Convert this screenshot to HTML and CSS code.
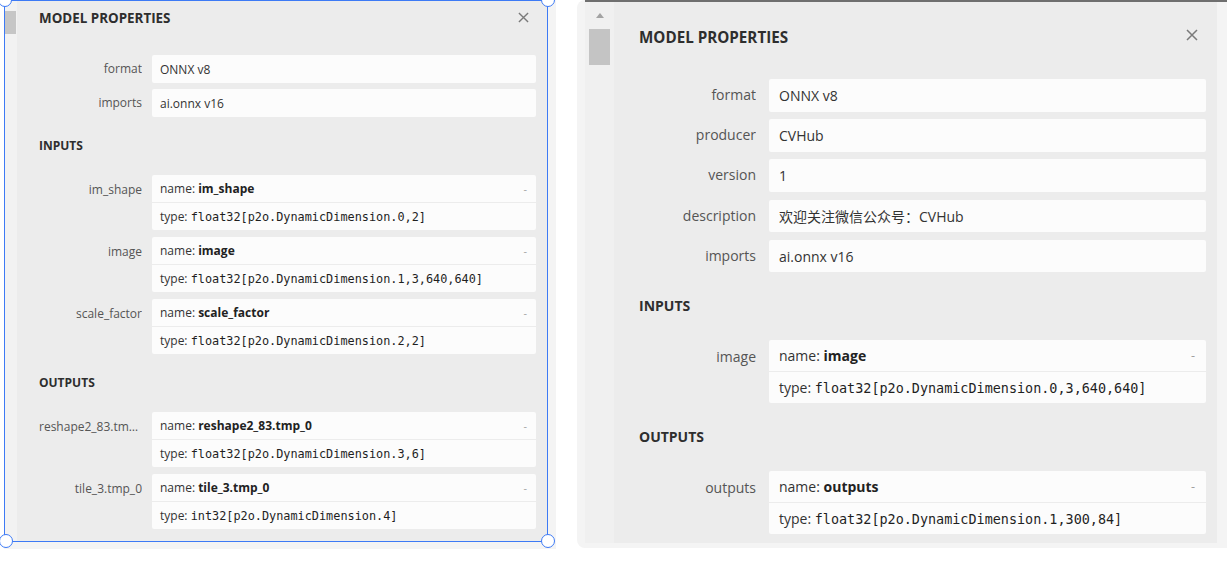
FILE: index.html
```html
<!DOCTYPE html>
<html lang="en">
<head>
<meta charset="utf-8">
<title>Model properties</title>
<link rel="stylesheet" href="styles.css">
</head>
<body>
<div class="stage">
  <section class="pane pane-a">
    <div class="track"><div class="thumb"></div></div>
    <div class="sheet">
      <div class="head">
        <span class="title">MODEL PROPERTIES</span>
        <svg class="close" viewBox="0 0 12 12"><path d="M1 1L11 11M11 1L1 11"/></svg>
      </div>
      <div class="props first">
        <div class="row"><div class="label">format</div><div class="box"><div class="line">ONNX v8</div></div></div>
        <div class="row"><div class="label">imports</div><div class="box"><div class="line">ai.onnx v16</div></div></div>
      </div>
      <div class="section">INPUTS</div>
      <div class="props blocks">
        <div class="row"><div class="label">im_shape</div><div class="box">
          <div class="line"><span>name: <b>im_shape</b></span><span class="toggle">-</span></div>
          <div class="line"><span>type: <code>float32[p2o.DynamicDimension.0,2]</code></span></div>
        </div></div>
        <div class="row"><div class="label">image</div><div class="box">
          <div class="line"><span>name: <b>image</b></span><span class="toggle">-</span></div>
          <div class="line"><span>type: <code>float32[p2o.DynamicDimension.1,3,640,640]</code></span></div>
        </div></div>
        <div class="row"><div class="label">scale_factor</div><div class="box">
          <div class="line"><span>name: <b>scale_factor</b></span><span class="toggle">-</span></div>
          <div class="line"><span>type: <code>float32[p2o.DynamicDimension.2,2]</code></span></div>
        </div></div>
      </div>
      <div class="section">OUTPUTS</div>
      <div class="props blocks">
        <div class="row"><div class="label">reshape2_83.tmp_0</div><div class="box">
          <div class="line"><span>name: <b>reshape2_83.tmp_0</b></span><span class="toggle">-</span></div>
          <div class="line"><span>type: <code>float32[p2o.DynamicDimension.3,6]</code></span></div>
        </div></div>
        <div class="row"><div class="label">tile_3.tmp_0</div><div class="box">
          <div class="line"><span>name: <b>tile_3.tmp_0</b></span><span class="toggle">-</span></div>
          <div class="line"><span>type: <code>int32[p2o.DynamicDimension.4]</code></span></div>
        </div></div>
      </div>
    </div>
    <div class="selection">
      <span class="handle tl"></span><span class="handle tr"></span>
      <span class="handle bl"></span><span class="handle br"></span>
    </div>
  </section>

  <section class="pane pane-b">
    <div class="frame">
      <div class="track"><span class="arrow"></span><div class="thumb"></div></div>
      <div class="sheet">
        <div class="head">
          <span class="title">MODEL PROPERTIES</span>
          <svg class="close" viewBox="0 0 12 12"><path d="M1 1L11 11M11 1L1 11"/></svg>
        </div>
        <div class="props first">
          <div class="row"><div class="label">format</div><div class="box"><div class="line">ONNX v8</div></div></div>
          <div class="row"><div class="label">producer</div><div class="box"><div class="line">CVHub</div></div></div>
          <div class="row"><div class="label">version</div><div class="box"><div class="line">1</div></div></div>
          <div class="row"><div class="label">description</div><div class="box"><div class="line">欢迎关注微信公众号：CVHub</div></div></div>
          <div class="row"><div class="label">imports</div><div class="box"><div class="line">ai.onnx v16</div></div></div>
        </div>
        <div class="section">INPUTS</div>
        <div class="props blocks">
          <div class="row"><div class="label">image</div><div class="box">
            <div class="line"><span>name: <b>image</b></span><span class="toggle">-</span></div>
            <div class="line"><span>type: <code>float32[p2o.DynamicDimension.0,3,640,640]</code></span></div>
          </div></div>
        </div>
        <div class="section">OUTPUTS</div>
        <div class="props blocks">
          <div class="row"><div class="label">outputs</div><div class="box">
            <div class="line"><span>name: <b>outputs</b></span><span class="toggle">-</span></div>
            <div class="line"><span>type: <code>float32[p2o.DynamicDimension.1,300,84]</code></span></div>
          </div></div>
        </div>
      </div>
    </div>
  </section>
</div>
</body>
</html>
```

FILE: styles.css
```css
* { box-sizing: border-box; }

html, body {
  margin: 0;
  background: #ffffff;
}

body {
  font-family: "Open Sans", "Noto Sans CJK SC", sans-serif;
  color: #333333;
}

.stage {
  display: flex;
  align-items: flex-start;
  padding-left: 4px;
}

/* ---------- pane scale variables ---------- */
.pane-a {
  --pad-l: 22px;
  --pad-r: 12px;
  --label-w: 103px;
  --label-gap: 10px;
  --fs: 12px;
  --mono: 11.85px;
  --title-fs: 13.4px;
  --head-h: 36px;
  --first-m: 19px;
  --row-h: 28px;
  --row-gap: 6px;
  --line-h: 27px;
  --block-gap: 7px;
  --sec-h: 28px;
  --sec-m: 15px;
  --text-pad: 8px;
  --close: 11px;
  --close-r: 19px;
}

.pane-b {
  --pad-l: 25px;
  --pad-r: 11px;
  --label-w: 117px;
  --label-gap: 13px;
  --fs: 14px;
  --mono: 13.45px;
  --title-fs: 15.2px;
  --head-h: 70px;
  --first-m: 7px;
  --row-h: 32.6px;
  --row-gap: 7.6px;
  --line-h: 31px;
  --block-gap: 8px;
  --sec-h: 32px;
  --sec-m: 18px;
  --text-pad: 10px;
  --close: 12px;
  --close-r: 19px;
}

/* ---------- left pane ---------- */
.pane-a {
  position: relative;
  width: 552px;
  height: 549px;
  display: flex;
  background: #f4f4f4;
  padding: 0 8px 7px 0;
}

.pane-a .track {
  width: 13px;
  height: 542px;
  background: #f2f2f2;
  padding-top: 11px;
}

.pane-a .thumb {
  margin-left: 1px;
  width: 11px;
  height: 23px;
  background: #c6c6c6;
}

.pane-a .sheet {
  width: 531px;
  height: 542px;
}

.selection {
  position: absolute;
  left: 0;
  top: 0;
  width: 544px;
  height: 542px;
  border: 1px solid #3d7af5;
}

.handle {
  position: absolute;
  width: 14px;
  height: 14px;
  border-radius: 50%;
  background: #ffffff;
  border: 1px solid #3d7af5;
}
.handle.tl { left: -7px; top: -8px; }
.handle.tr { right: -8px; top: -8px; }
.handle.bl { left: -6px; bottom: -7px; }
.handle.br { right: -8px; bottom: -7px; }

/* ---------- right pane ---------- */
.pane-b {
  margin-left: 21px;
  width: 650px;
  height: 548px;
  background: #f4f4f4;
  border-radius: 8px 0 0 8px;
  padding: 0 0 5px 8px;
  display: flex;
}

.frame {
  flex: 1;
  display: flex;
  border-top: 2px solid #6f6f6f;
}

.pane-b .track {
  width: 29px;
  background: #f0f0f0;
  display: flex;
  flex-direction: column;
  align-items: center;
}

.pane-b .arrow {
  margin-top: 11px;
  width: 0;
  height: 0;
  border-left: 4px solid transparent;
  border-right: 4px solid transparent;
  border-bottom: 5px solid #a3a3a3;
}

.pane-b .thumb {
  margin-top: 11px;
  width: 21px;
  height: 36px;
  background: #c4c4c4;
}

.pane-b .sheet {
  width: 603px;
}

/* ---------- shared sheet content ---------- */
.sheet {
  background: #ececec;
  padding: 0 var(--pad-r) 0 var(--pad-l);
  font-size: var(--fs);
}

.head {
  height: var(--head-h);
  display: flex;
  align-items: center;
  justify-content: space-between;
  margin-right: calc(var(--close-r) - var(--pad-r));
}

.title {
  font-weight: 700;
  font-size: var(--title-fs);
  color: #2e2e2e;
}

.close {
  width: var(--close);
  height: var(--close);
  margin-top: -2px;
  fill: none;
  stroke: #7a7a7a;
  stroke-width: 1.5;
}

.pane-b .close { margin-top: -4px; }

.props {
  display: flex;
  flex-direction: column;
  gap: var(--row-gap);
}

.props.first { margin-top: var(--first-m); }

.props.blocks { gap: var(--block-gap); }

.row {
  display: flex;
  align-items: flex-start;
  gap: var(--label-gap);
}

.label {
  width: var(--label-w);
  flex: none;
  text-align: right;
  line-height: var(--row-h);
  color: #555555;
  white-space: nowrap;
  overflow: hidden;
  text-overflow: ellipsis;
}

.blocks .label {
  line-height: var(--line-h);
  padding-top: 1px;
}

.box {
  flex: 1;
  background: #fcfcfc;
  border-radius: 2px;
}

.line {
  height: var(--row-h);
  display: flex;
  align-items: center;
  justify-content: space-between;
  padding: 0 var(--text-pad);
  color: #333333;
  white-space: nowrap;
}

.blocks .line { height: var(--line-h); }

.blocks .line + .line {
  border-top: 1px solid #ececec;
  height: calc(var(--line-h) + 1px);
}

.line b {
  font-weight: 700;
  color: #222222;
}

.line code {
  font-family: "DejaVu Sans Mono", "Liberation Mono", monospace;
  font-size: var(--mono);
  color: #1f1f1f;
}

.toggle {
  color: #a0a0a0;
  margin-right: 1px;
  font-size: 0.9em;
}

.section {
  height: var(--sec-h);
  line-height: var(--sec-h);
  margin: var(--sec-m) 0;
  font-weight: 700;
  font-size: var(--fs);
  color: #2e2e2e;
}
```
